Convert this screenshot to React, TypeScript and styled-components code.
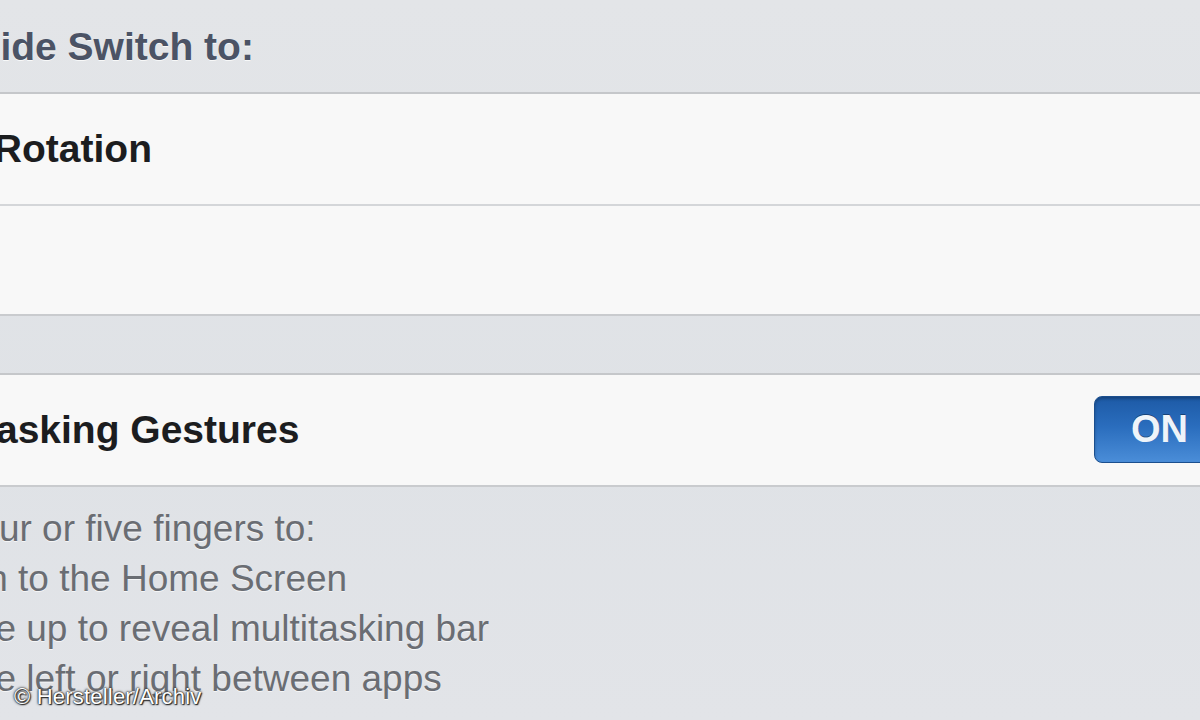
import React from 'react';
import styled, { createGlobalStyle } from 'styled-components';

const GlobalStyle = createGlobalStyle`
  html, body {
    margin: 0;
    padding: 0;
    background: #e0e3e7;
  }
  body {
    font-family: "Liberation Sans", Arial, sans-serif;
  }
`;

const Screen = styled.div`
  position: relative;
  width: 1200px;
  height: 720px;
  overflow: hidden;
  background: linear-gradient(180deg, #e3e5e8 0%, #dfe2e6 60%, #e2e4e8 100%);
`;

// the screenshot is a crop, so the settings column starts left of the viewport
const Column = styled.div`
  display: flex;
  flex-direction: column;
  margin-left: -108px;
  width: 1340px;
`;

const GroupHeader = styled.h2`
  margin: 0;
  height: 92px;
  display: flex;
  align-items: center;
  padding-top: 1px;
  box-sizing: border-box;
  font-size: 39px;
  font-weight: 700;
  color: #4b5365;
  text-shadow: 0 1px 0 rgba(255, 255, 255, 0.8);
`;

const Group = styled.div<{ $gap?: number }>`
  display: flex;
  flex-direction: column;
  margin-left: -20px;
  margin-top: ${(p) => p.$gap ?? 0}px;
  background: #f8f8f8;
  border-top: 2px solid #c5c7ca;
  border-bottom: 2px solid #c9cbce;
  border-radius: 0 16px 16px 0;
`;

const Row = styled.div`
  display: flex;
  align-items: center;
  justify-content: space-between;
  height: 110px;
  padding-left: 20px;
  box-sizing: border-box;

  & + & {
    border-top: 2px solid #d4d6d9;
  }
`;

const Label = styled.span`
  font-size: 39px;
  font-weight: 700;
  color: #1c1d1f;
`;

const Switch = styled.div`
  display: flex;
  align-items: center;
  width: 200px;
  height: 67px;
  margin-right: -62px;
  margin-top: -2px;
  box-sizing: border-box;
  border: 1px solid #1b4f8e;
  border-radius: 8px;
  background: linear-gradient(180deg, #1d5aa6 0%, #2a6dbd 45%, #4a8dd8 100%);
  box-shadow: inset 0 2px 3px rgba(0, 0, 0, 0.25);
  padding-left: 36px;
`;

const SwitchText = styled.span`
  font-size: 38px;
  font-weight: 700;
  color: #eef4fa;
  text-shadow: 0 -1px 0 rgba(0, 0, 0, 0.35);
`;

const Footer = styled.div`
  display: flex;
  flex-direction: column;
  padding-top: 17px;
`;

const FooterLine = styled.p`
  margin: 0;
  font-size: 37px;
  line-height: 50px;
  color: #6a6d73;
  text-shadow: 0 1px 0 rgba(255, 255, 255, 0.7);
`;

const Credit = styled.span`
  position: absolute;
  left: 14px;
  bottom: 10px;
  font-size: 22px;
  letter-spacing: 0.2px;
  color: #ffffff;
  text-shadow: 0 0 1px #2e2e2e, 0 0 2px #2e2e2e, 0 0 3px #3a3a3a, 1px 1px 1px #222222;
`;

const footerLines = [
  'Use four or five fingers to:',
  '• Pinch to the Home Screen',
  '• Swipe up to reveal multitasking bar',
  '• Swipe left or right between apps',
];

export default function App() {
  return (
    <>
      <GlobalStyle />
      <Screen>
        <Column>
          <GroupHeader>Use Side Switch to:</GroupHeader>
          <Group>
            <Row>
              <Label>Lock Rotation</Label>
            </Row>
            <Row>
              <Label>Mute</Label>
            </Row>
          </Group>

          <Group $gap={57}>
            <Row>
              <Label>Multitasking Gestures</Label>
              <Switch>
                <SwitchText>ON</SwitchText>
              </Switch>
            </Row>
          </Group>

          <Footer>
            {footerLines.map((line) => (
              <FooterLine key={line}>{line}</FooterLine>
            ))}
          </Footer>
        </Column>
        <Credit>© Hersteller/Archiv</Credit>
      </Screen>
    </>
  );
}
